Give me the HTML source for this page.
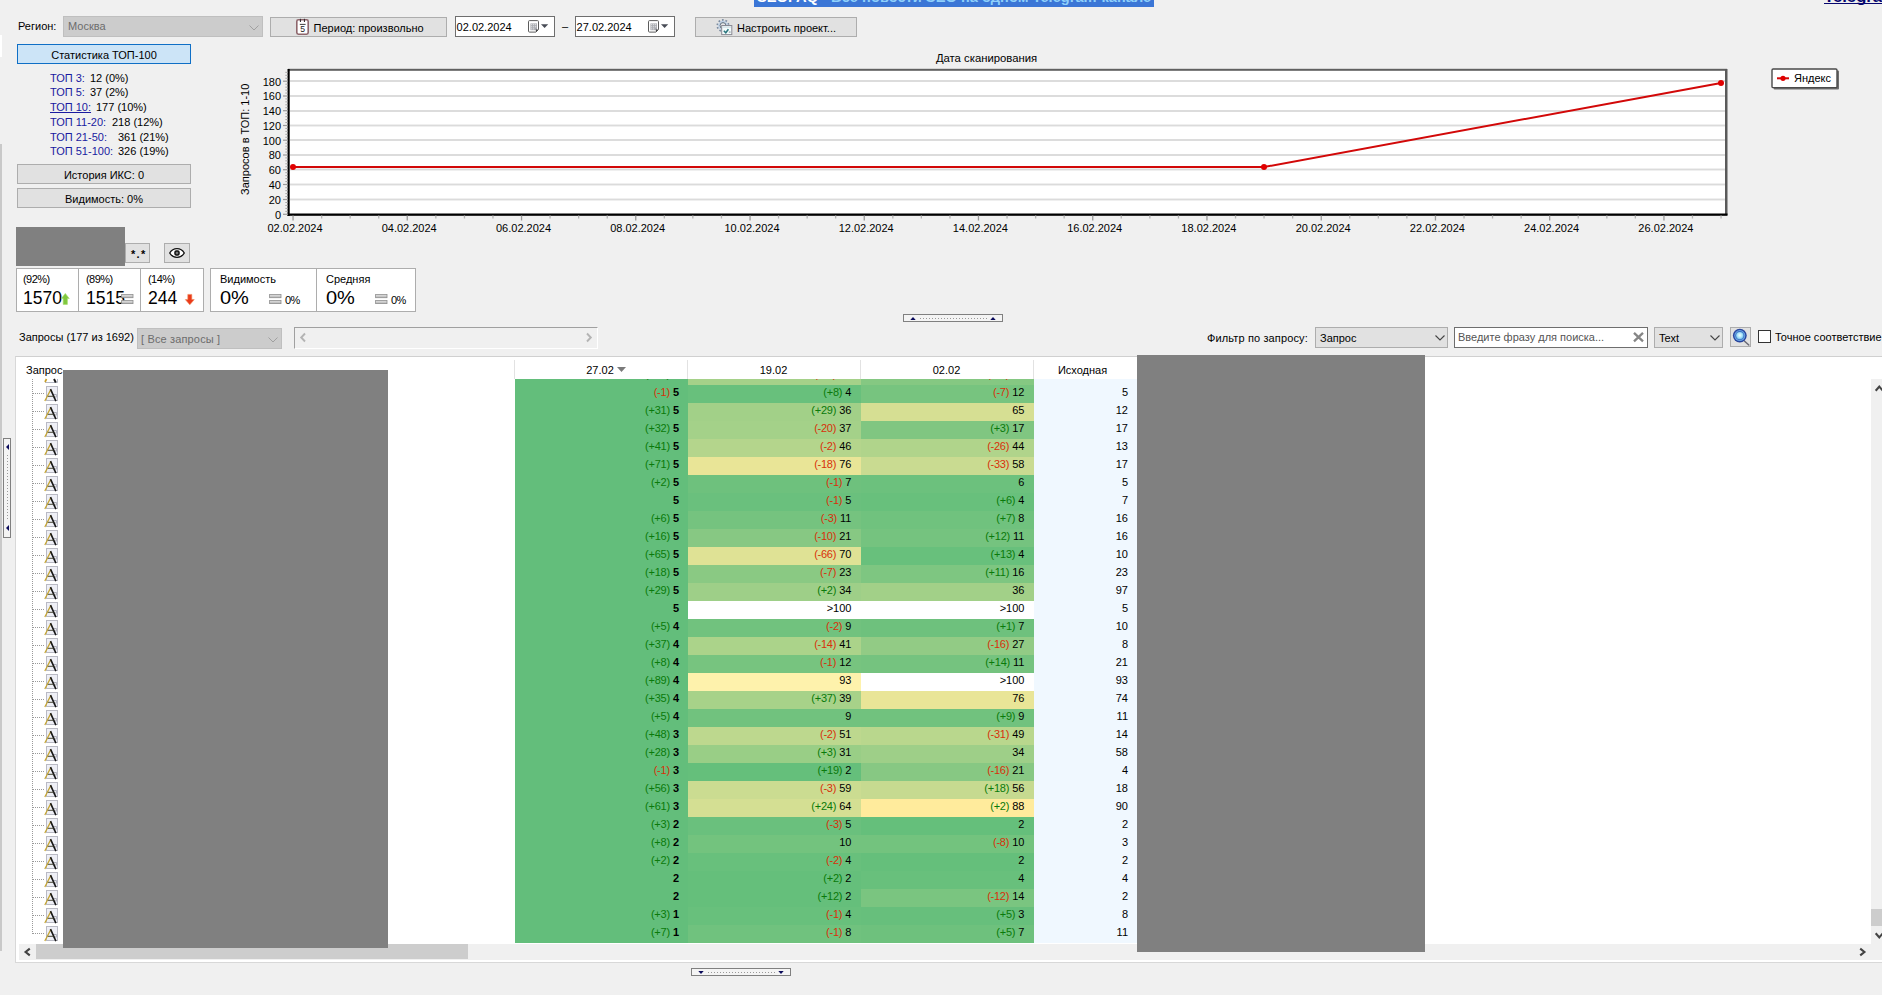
<!DOCTYPE html>
<html lang="ru"><head><meta charset="utf-8"><title>Позиции</title>
<style>
html,body{margin:0;padding:0;width:1882px;height:995px;overflow:hidden}
body{width:1882px;height:995px;overflow:hidden;background:#f0f0f0;position:relative;font:11px "Liberation Sans",Arial,sans-serif;color:#000}
div,span,a{position:absolute;white-space:pre;box-sizing:border-box}
.t{line-height:13px;height:13px}
.btn{background:#e1e1e1;border:1px solid #adadad}
.cmb{background:#cccccc;border:1px solid #bfbfbf}
.inp{background:#fff;border:1px solid #6e6e6e}
.g{color:#0a7a0a}.r{color:#d8300a}
.c{height:18px;text-align:right;line-height:13px;padding-top:0}
.c span{position:static;letter-spacing:-0.25px}
.c b{font-weight:bold}
.ic{left:44px;width:14px;height:16px}
svg{position:absolute;overflow:visible}
</style></head><body>
<div style="left:0;top:0;width:1882px;height:995px;overflow:hidden">

<div style="left:754px;top:-10px;width:400px;height:16.6px;background:#3b76d6;overflow:hidden"><span style="left:3px;top:-1.1px;font:bold 14.67px 'Liberation Sans',sans-serif;line-height:17px;height:17px;color:#8fd0fb"><span style="position:static;color:#fff">SEOFAQ</span> - Все новости SEO на одном Telegram-канале</span></div>
<a style="left:1824px;top:-13.5px;font:bold 16.7px 'Liberation Sans',sans-serif;line-height:19px;color:#06066e;text-decoration:underline;text-decoration-skip-ink:none;text-decoration-thickness:1.3px;text-underline-offset:1.4px">Telegram-канал</a>
<div style="left:0;top:35px;width:2px;height:22px;background:#fff"></div>
<div style="left:0;top:144px;width:1.8px;height:807px;background:#c9c9c9"></div>
<span class="t" style="left:18px;top:20px">Регион:</span>
<div class="cmb" style="left:63px;top:16px;width:200px;height:21px"><span class="t" style="left:4px;top:3px;color:#6d6d6d">Москва</span><svg style="left:185px;top:7.5px" width="10" height="6"><path d="M0.5 0.5 L5 5 L9.5 0.5" fill="none" stroke="#a0a0a0" stroke-width="1"/></svg></div>
<div class="btn" style="left:270px;top:17px;width:177px;height:20px"><span class="t" style="left:42.6px;top:4px">Период: произвольно</span>
<svg style="left:24px;top:0px" width="15" height="17"><rect x="1.8" y="1.8" width="11.4" height="14.4" rx="1.6" fill="#fff" stroke="#8e666c" stroke-width="1.6"/><rect x="4.9" y="0.8" width="1.1" height="3.2" fill="#3a3034"/><rect x="8.9" y="0.8" width="1.1" height="3.2" fill="#3a3034"/><rect x="4.8" y="5.9" width="5.8" height="0.9" fill="#2a2a2a"/><text x="7.7" y="14.2" font-size="8.6" font-family="Liberation Sans,sans-serif" text-anchor="middle" fill="#222">5</text></svg></div>
<div class="inp" style="left:455px;top:16px;width:100px;height:21px"><span class="t" style="left:0.6px;top:4px">02.02.2024</span>
<svg style="left:72px;top:3px" width="22" height="14"><path d="M1.5 0.6h8a1 1 0 0 1 1 1v7.9l-2.6 2.6h-6.4a1 1 0 0 1-1-1v-9.5a1 1 0 0 1 1-1z" fill="#fff" stroke="#5c5c5c" stroke-width="1"/><rect x="2.4" y="3.4" width="6.6" height="6.8" fill="#a9abb0"/><g fill="#f4f4f6"><rect x="3.2" y="4.2" width="1" height="1"/><rect x="5.2" y="4.2" width="1" height="1"/><rect x="7.2" y="4.2" width="1" height="1"/><rect x="3.2" y="6.3" width="1" height="1"/><rect x="5.2" y="6.3" width="1" height="1"/><rect x="7.2" y="6.3" width="1" height="1"/><rect x="3.2" y="8.4" width="1" height="1"/><rect x="5.2" y="8.4" width="1" height="1"/></g><path d="M7.9 12.1v-2.6h2.6z" fill="#444"/><path d="M13 4.2h7.2l-3.6 3.9z" fill="#484c56"/></svg></div>
<span class="t" style="left:562px;top:20px">–</span>
<div class="inp" style="left:575px;top:16px;width:100px;height:21px"><span class="t" style="left:0.6px;top:4px">27.02.2024</span>
<svg style="left:72px;top:3px" width="22" height="14"><path d="M1.5 0.6h8a1 1 0 0 1 1 1v7.9l-2.6 2.6h-6.4a1 1 0 0 1-1-1v-9.5a1 1 0 0 1 1-1z" fill="#fff" stroke="#5c5c5c" stroke-width="1"/><rect x="2.4" y="3.4" width="6.6" height="6.8" fill="#a9abb0"/><g fill="#f4f4f6"><rect x="3.2" y="4.2" width="1" height="1"/><rect x="5.2" y="4.2" width="1" height="1"/><rect x="7.2" y="4.2" width="1" height="1"/><rect x="3.2" y="6.3" width="1" height="1"/><rect x="5.2" y="6.3" width="1" height="1"/><rect x="7.2" y="6.3" width="1" height="1"/><rect x="3.2" y="8.4" width="1" height="1"/><rect x="5.2" y="8.4" width="1" height="1"/></g><path d="M7.9 12.1v-2.6h2.6z" fill="#444"/><path d="M13 4.2h7.2l-3.6 3.9z" fill="#484c56"/></svg></div>
<div class="btn" style="left:695px;top:17px;width:162px;height:20px"><span class="t" style="left:41px;top:4px">Настроить проект...</span>
<svg style="left:20px;top:-0.2px" width="18" height="18"><circle cx="7" cy="7.6" r="5.6" fill="none" stroke="#7c8ca0" stroke-width="1.9" stroke-dasharray="1.7 1.82"/><circle cx="7" cy="7.6" r="4.3" fill="#d4e2f0" stroke="#c0d2e6" stroke-width="1.2"/><circle cx="7" cy="7.6" r="3" fill="#e6e6e6" stroke="#5e6e7e" stroke-width="1"/><rect x="5.7" y="7.5" width="10.1" height="9.1" fill="#f4fbfb" stroke="#8a8a94" stroke-width="1"/><rect x="6.6" y="8.4" width="8.4" height="1.3" fill="#cfe0e6"/><path d="M7.8 12.8l2 2 2.6-3.6" fill="none" stroke="#2a767e" stroke-width="1.5"/><rect x="12.8" y="13.6" width="1.8" height="0.9" fill="#6a7a86"/></svg></div>
<div style="left:17px;top:44px;width:174px;height:20px;background:#cce4f7;border:1px solid #0f6fc6"><span class="t" style="left:0;width:172px;text-align:center;top:4px">Статистика ТОП-100</span></div>
<span class="t" style="left:50px;top:72px;color:#1a1aa0">ТОП 3:</span><span class="t" style="left:90px;top:72px">12 (0%)</span>
<span class="t" style="left:50px;top:86px;color:#1a1aa0">ТОП 5:</span><span class="t" style="left:90px;top:86px">37 (2%)</span>
<span class="t" style="left:50px;top:101px;color:#1a1aa0;text-decoration:underline">ТОП 10:</span><span class="t" style="left:96px;top:101px">177 (10%)</span>
<span class="t" style="left:50px;top:116px;color:#1a1aa0">ТОП 11-20:</span><span class="t" style="left:112px;top:116px">218 (12%)</span>
<span class="t" style="left:50px;top:131px;color:#1a1aa0">ТОП 21-50:</span><span class="t" style="left:118px;top:131px">361 (21%)</span>
<span class="t" style="left:50px;top:145px;color:#1a1aa0">ТОП 51-100:</span><span class="t" style="left:118px;top:145px">326 (19%)</span>
<div class="btn" style="left:17px;top:164px;width:174px;height:20px"><span class="t" style="left:0;width:172px;text-align:center;top:4px">История ИКС: 0</span></div>
<div class="btn" style="left:17px;top:188px;width:174px;height:20px"><span class="t" style="left:0;width:172px;text-align:center;top:4px">Видимость: 0%</span></div>
<div style="left:16px;top:227px;width:109px;height:39px;background:#808080"></div>
<div class="btn" style="left:125px;top:243px;width:25px;height:20px"><span class="t" style="left:5px;top:4px;font-weight:bold;font-size:11px;letter-spacing:1.3px">*.*</span></div>
<div class="btn" style="left:164px;top:243px;width:26px;height:20px"><svg style="left:4px;top:4px" width="16" height="10"><path d="M0.7 5C3 1.2 5.5 0.7 8 0.7S13 1.2 15.3 5C13 8.8 10.5 9.3 8 9.3S3 8.8 0.7 5z" fill="#fff" stroke="#111" stroke-width="1.3"/><rect x="6" y="3" width="4" height="4" rx="1.2" fill="#777" stroke="#111" stroke-width="1.5"/></svg></div>
<div style="left:16px;top:268px;width:188px;height:44px;background:#fff;border:1px solid #adadad"></div>
<div style="left:78px;top:268px;width:1px;height:44px;background:#adadad"></div><div style="left:140px;top:268px;width:1px;height:44px;background:#adadad"></div>
<div style="left:210px;top:268px;width:206px;height:44px;background:#fff;border:1px solid #adadad"></div>
<div style="left:316px;top:268px;width:1px;height:44px;background:#adadad"></div>
<span class="t" style="left:23px;top:273px;letter-spacing:-0.55px">(92%)</span><span style="left:23px;top:288px;font-size:18.8px;line-height:20px;height:20px;transform-origin:0 50%;transform:scaleX(0.935)">1570</span>
<span class="t" style="left:86px;top:273px;letter-spacing:-0.55px">(89%)</span><span style="left:86px;top:288px;font-size:18.8px;line-height:20px;height:20px;transform-origin:0 50%;transform:scaleX(0.935)">1515</span>
<span class="t" style="left:148px;top:273px;letter-spacing:-0.55px">(14%)</span><span style="left:148px;top:288px;font-size:18.8px;line-height:20px;height:20px;transform-origin:0 50%;transform:scaleX(0.935)">244</span>
<span class="t" style="left:220px;top:273px">Видимость</span><span style="left:220px;top:288px;font-size:18.8px;line-height:20px;height:20px;transform-origin:0 50%;transform:scaleX(1.065)">0%</span>
<span class="t" style="left:326px;top:273px">Средняя</span><span style="left:326px;top:288px;font-size:18.8px;line-height:20px;height:20px;transform-origin:0 50%;transform:scaleX(1.065)">0%</span>
<svg style="left:61px;top:293px" width="9" height="12"><path d="M4.3 0.4L8.3 5.6H6.4V11.4H2.2V5.6H0.3z" fill="#80c83e" stroke="#a4dc6c" stroke-width="0.6"/></svg>
<svg style="left:185px;top:293.5px" width="10" height="11"><path d="M4.8 10.8L9.3 5.6H6.8V0.4H2.8V5.6H0.3z" fill="#ea3a1a" stroke="#f08a5a" stroke-width="0.6"/></svg>
<svg style="left:121px;top:294px" width="13" height="10"><defs><linearGradient id="eg121" x1="0" y1="0" x2="0" y2="1"><stop offset="0" stop-color="#e4e4e4"/><stop offset="1" stop-color="#b4b4b4"/></linearGradient></defs><rect x="0.6" y="0.5" width="11.4" height="3.2" fill="url(#eg121)" stroke="#8e8e8e" stroke-width="0.8"/><rect x="0.6" y="6.4" width="11.4" height="3.2" fill="url(#eg121)" stroke="#8e8e8e" stroke-width="0.8"/></svg>
<svg style="left:269px;top:294px" width="13" height="10"><defs><linearGradient id="eg269" x1="0" y1="0" x2="0" y2="1"><stop offset="0" stop-color="#e4e4e4"/><stop offset="1" stop-color="#b4b4b4"/></linearGradient></defs><rect x="0.6" y="0.5" width="11.4" height="3.2" fill="url(#eg269)" stroke="#8e8e8e" stroke-width="0.8"/><rect x="0.6" y="6.4" width="11.4" height="3.2" fill="url(#eg269)" stroke="#8e8e8e" stroke-width="0.8"/></svg>
<svg style="left:375px;top:294px" width="13" height="10"><defs><linearGradient id="eg375" x1="0" y1="0" x2="0" y2="1"><stop offset="0" stop-color="#e4e4e4"/><stop offset="1" stop-color="#b4b4b4"/></linearGradient></defs><rect x="0.6" y="0.5" width="11.4" height="3.2" fill="url(#eg375)" stroke="#8e8e8e" stroke-width="0.8"/><rect x="0.6" y="6.4" width="11.4" height="3.2" fill="url(#eg375)" stroke="#8e8e8e" stroke-width="0.8"/></svg>
<span class="t" style="left:285px;top:294px;letter-spacing:-0.7px">0%</span><span class="t" style="left:391px;top:294px;letter-spacing:-0.7px">0%</span>
<svg style="left:0;top:0" width="1882" height="250" font-family="Liberation Sans,Arial,sans-serif" font-size="11">
<rect x="288" y="69" width="1439" height="146" fill="#fff"/>
<rect x="290" y="80.05" width="1435" height="1.9" fill="#dbdbdb"/>
<rect x="290" y="95.05" width="1435" height="1.9" fill="#dbdbdb"/>
<rect x="290" y="110.05" width="1435" height="1.9" fill="#dbdbdb"/>
<rect x="290" y="124.55" width="1435" height="1.9" fill="#dbdbdb"/>
<rect x="290" y="139.05" width="1435" height="1.9" fill="#dbdbdb"/>
<rect x="290" y="154.05" width="1435" height="1.9" fill="#dbdbdb"/>
<rect x="290" y="168.55" width="1435" height="1.9" fill="#dbdbdb"/>
<rect x="290" y="183.55" width="1435" height="1.9" fill="#dbdbdb"/>
<rect x="290" y="198.55" width="1435" height="1.9" fill="#dbdbdb"/>
<rect x="288" y="68.8" width="1439" height="2" fill="#606060"/><rect x="1725" y="69" width="2.5" height="146" fill="#5a5a5a"/>
<rect x="287.5" y="69" width="2.2" height="147" fill="#000"/><rect x="287.5" y="213.5" width="1440" height="2.3" fill="#000"/>
<rect x="283" y="213.70000000000002" width="5" height="1.2" fill="#9a9a9a"/>
<text x="281" y="218.6" text-anchor="end">0</text>
<rect x="285.3" y="210.85" width="2.5" height="1" fill="#a8a8a8"/>
<rect x="285.3" y="207.90" width="2.5" height="1" fill="#a8a8a8"/>
<rect x="285.3" y="204.95" width="2.5" height="1" fill="#a8a8a8"/>
<rect x="285.3" y="202.00" width="2.5" height="1" fill="#a8a8a8"/>
<rect x="283" y="198.9" width="5" height="1.2" fill="#9a9a9a"/>
<text x="281" y="203.8" text-anchor="end">20</text>
<rect x="285.3" y="196.05" width="2.5" height="1" fill="#a8a8a8"/>
<rect x="285.3" y="193.10" width="2.5" height="1" fill="#a8a8a8"/>
<rect x="285.3" y="190.15" width="2.5" height="1" fill="#a8a8a8"/>
<rect x="285.3" y="187.20" width="2.5" height="1" fill="#a8a8a8"/>
<rect x="283" y="183.9" width="5" height="1.2" fill="#9a9a9a"/>
<text x="281" y="188.8" text-anchor="end">40</text>
<rect x="285.3" y="181.05" width="2.5" height="1" fill="#a8a8a8"/>
<rect x="285.3" y="178.10" width="2.5" height="1" fill="#a8a8a8"/>
<rect x="285.3" y="175.15" width="2.5" height="1" fill="#a8a8a8"/>
<rect x="285.3" y="172.20" width="2.5" height="1" fill="#a8a8a8"/>
<rect x="283" y="169.1" width="5" height="1.2" fill="#9a9a9a"/>
<text x="281" y="174.0" text-anchor="end">60</text>
<rect x="285.3" y="166.25" width="2.5" height="1" fill="#a8a8a8"/>
<rect x="285.3" y="163.30" width="2.5" height="1" fill="#a8a8a8"/>
<rect x="285.3" y="160.35" width="2.5" height="1" fill="#a8a8a8"/>
<rect x="285.3" y="157.40" width="2.5" height="1" fill="#a8a8a8"/>
<rect x="283" y="154.4" width="5" height="1.2" fill="#9a9a9a"/>
<text x="281" y="159.3" text-anchor="end">80</text>
<rect x="285.3" y="151.55" width="2.5" height="1" fill="#a8a8a8"/>
<rect x="285.3" y="148.60" width="2.5" height="1" fill="#a8a8a8"/>
<rect x="285.3" y="145.65" width="2.5" height="1" fill="#a8a8a8"/>
<rect x="285.3" y="142.70" width="2.5" height="1" fill="#a8a8a8"/>
<rect x="283" y="139.6" width="5" height="1.2" fill="#9a9a9a"/>
<text x="281" y="144.5" text-anchor="end">100</text>
<rect x="285.3" y="136.75" width="2.5" height="1" fill="#a8a8a8"/>
<rect x="285.3" y="133.80" width="2.5" height="1" fill="#a8a8a8"/>
<rect x="285.3" y="130.85" width="2.5" height="1" fill="#a8a8a8"/>
<rect x="285.3" y="127.90" width="2.5" height="1" fill="#a8a8a8"/>
<rect x="283" y="124.9" width="5" height="1.2" fill="#9a9a9a"/>
<text x="281" y="129.8" text-anchor="end">120</text>
<rect x="285.3" y="122.05" width="2.5" height="1" fill="#a8a8a8"/>
<rect x="285.3" y="119.10" width="2.5" height="1" fill="#a8a8a8"/>
<rect x="285.3" y="116.15" width="2.5" height="1" fill="#a8a8a8"/>
<rect x="285.3" y="113.20" width="2.5" height="1" fill="#a8a8a8"/>
<rect x="283" y="110.10000000000001" width="5" height="1.2" fill="#9a9a9a"/>
<text x="281" y="115.0" text-anchor="end">140</text>
<rect x="285.3" y="107.25" width="2.5" height="1" fill="#a8a8a8"/>
<rect x="285.3" y="104.30" width="2.5" height="1" fill="#a8a8a8"/>
<rect x="285.3" y="101.35" width="2.5" height="1" fill="#a8a8a8"/>
<rect x="285.3" y="98.40" width="2.5" height="1" fill="#a8a8a8"/>
<rect x="283" y="95.4" width="5" height="1.2" fill="#9a9a9a"/>
<text x="281" y="100.3" text-anchor="end">160</text>
<rect x="285.3" y="92.55" width="2.5" height="1" fill="#a8a8a8"/>
<rect x="285.3" y="89.60" width="2.5" height="1" fill="#a8a8a8"/>
<rect x="285.3" y="86.65" width="2.5" height="1" fill="#a8a8a8"/>
<rect x="285.3" y="83.70" width="2.5" height="1" fill="#a8a8a8"/>
<rect x="283" y="80.60000000000001" width="5" height="1.2" fill="#9a9a9a"/>
<text x="281" y="85.5" text-anchor="end">180</text>
<rect x="285.3" y="77.75" width="2.5" height="1" fill="#a8a8a8"/>
<rect x="285.3" y="74.80" width="2.5" height="1" fill="#a8a8a8"/>
<rect x="285.3" y="71.85" width="2.5" height="1" fill="#a8a8a8"/>
<rect x="292.4" y="215.5" width="1.3" height="5" fill="#9a9a9a"/>
<text x="295.0" y="232" text-anchor="middle">02.02.2024</text>
<rect x="321.0" y="215.5" width="1.3" height="3" fill="#b4b4b4"/>
<rect x="349.5" y="215.5" width="1.3" height="3" fill="#b4b4b4"/>
<rect x="378.1" y="215.5" width="1.3" height="3" fill="#b4b4b4"/>
<rect x="406.6" y="215.5" width="1.3" height="5" fill="#9a9a9a"/>
<text x="409.2" y="232" text-anchor="middle">04.02.2024</text>
<rect x="435.2" y="215.5" width="1.3" height="3" fill="#b4b4b4"/>
<rect x="463.8" y="215.5" width="1.3" height="3" fill="#b4b4b4"/>
<rect x="492.3" y="215.5" width="1.3" height="3" fill="#b4b4b4"/>
<rect x="520.9" y="215.5" width="1.3" height="5" fill="#9a9a9a"/>
<text x="523.5" y="232" text-anchor="middle">06.02.2024</text>
<rect x="549.4" y="215.5" width="1.3" height="3" fill="#b4b4b4"/>
<rect x="578.0" y="215.5" width="1.3" height="3" fill="#b4b4b4"/>
<rect x="606.6" y="215.5" width="1.3" height="3" fill="#b4b4b4"/>
<rect x="635.1" y="215.5" width="1.3" height="5" fill="#9a9a9a"/>
<text x="637.7" y="232" text-anchor="middle">08.02.2024</text>
<rect x="663.7" y="215.5" width="1.3" height="3" fill="#b4b4b4"/>
<rect x="692.2" y="215.5" width="1.3" height="3" fill="#b4b4b4"/>
<rect x="720.8" y="215.5" width="1.3" height="3" fill="#b4b4b4"/>
<rect x="749.4" y="215.5" width="1.3" height="5" fill="#9a9a9a"/>
<text x="752.0" y="232" text-anchor="middle">10.02.2024</text>
<rect x="777.9" y="215.5" width="1.3" height="3" fill="#b4b4b4"/>
<rect x="806.5" y="215.5" width="1.3" height="3" fill="#b4b4b4"/>
<rect x="835.0" y="215.5" width="1.3" height="3" fill="#b4b4b4"/>
<rect x="863.6" y="215.5" width="1.3" height="5" fill="#9a9a9a"/>
<text x="866.2" y="232" text-anchor="middle">12.02.2024</text>
<rect x="892.2" y="215.5" width="1.3" height="3" fill="#b4b4b4"/>
<rect x="920.7" y="215.5" width="1.3" height="3" fill="#b4b4b4"/>
<rect x="949.3" y="215.5" width="1.3" height="3" fill="#b4b4b4"/>
<rect x="977.8" y="215.5" width="1.3" height="5" fill="#9a9a9a"/>
<text x="980.4" y="232" text-anchor="middle">14.02.2024</text>
<rect x="1006.4" y="215.5" width="1.3" height="3" fill="#b4b4b4"/>
<rect x="1035.0" y="215.5" width="1.3" height="3" fill="#b4b4b4"/>
<rect x="1063.5" y="215.5" width="1.3" height="3" fill="#b4b4b4"/>
<rect x="1092.1" y="215.5" width="1.3" height="5" fill="#9a9a9a"/>
<text x="1094.7" y="232" text-anchor="middle">16.02.2024</text>
<rect x="1120.6" y="215.5" width="1.3" height="3" fill="#b4b4b4"/>
<rect x="1149.2" y="215.5" width="1.3" height="3" fill="#b4b4b4"/>
<rect x="1177.8" y="215.5" width="1.3" height="3" fill="#b4b4b4"/>
<rect x="1206.3" y="215.5" width="1.3" height="5" fill="#9a9a9a"/>
<text x="1208.9" y="232" text-anchor="middle">18.02.2024</text>
<rect x="1234.9" y="215.5" width="1.3" height="3" fill="#b4b4b4"/>
<rect x="1263.4" y="215.5" width="1.3" height="3" fill="#b4b4b4"/>
<rect x="1292.0" y="215.5" width="1.3" height="3" fill="#b4b4b4"/>
<rect x="1320.6" y="215.5" width="1.3" height="5" fill="#9a9a9a"/>
<text x="1323.2" y="232" text-anchor="middle">20.02.2024</text>
<rect x="1349.1" y="215.5" width="1.3" height="3" fill="#b4b4b4"/>
<rect x="1377.7" y="215.5" width="1.3" height="3" fill="#b4b4b4"/>
<rect x="1406.2" y="215.5" width="1.3" height="3" fill="#b4b4b4"/>
<rect x="1434.8" y="215.5" width="1.3" height="5" fill="#9a9a9a"/>
<text x="1437.4" y="232" text-anchor="middle">22.02.2024</text>
<rect x="1463.4" y="215.5" width="1.3" height="3" fill="#b4b4b4"/>
<rect x="1491.9" y="215.5" width="1.3" height="3" fill="#b4b4b4"/>
<rect x="1520.5" y="215.5" width="1.3" height="3" fill="#b4b4b4"/>
<rect x="1549.0" y="215.5" width="1.3" height="5" fill="#9a9a9a"/>
<text x="1551.6" y="232" text-anchor="middle">24.02.2024</text>
<rect x="1577.6" y="215.5" width="1.3" height="3" fill="#b4b4b4"/>
<rect x="1606.2" y="215.5" width="1.3" height="3" fill="#b4b4b4"/>
<rect x="1634.7" y="215.5" width="1.3" height="3" fill="#b4b4b4"/>
<rect x="1663.3" y="215.5" width="1.3" height="5" fill="#9a9a9a"/>
<text x="1665.9" y="232" text-anchor="middle">26.02.2024</text>
<rect x="1691.8" y="215.5" width="1.3" height="3" fill="#b4b4b4"/>
<rect x="1720.4" y="215.5" width="1.3" height="3" fill="#b4b4b4"/>
<text x="986.5" y="62" text-anchor="middle" font-size="11.3">Дата сканирования</text>
<text transform="translate(248.5,139.3) rotate(-90)" text-anchor="middle">Запросов в ТОП: 1-10</text>
<polyline points="293,167 1264,167 1721,83" fill="none" stroke="#d20808" stroke-width="2" stroke-linejoin="round"/>
<circle cx="293" cy="167" r="3" fill="#e00000"/>
<circle cx="1264" cy="167" r="3" fill="#e00000"/>
<circle cx="1721" cy="83" r="3" fill="#e00000"/>
<rect x="1773.6" y="70.6" width="65.4" height="19" rx="1" fill="#6e6e6e"/>
<rect x="1772" y="69" width="65" height="18.6" rx="1.2" fill="#fff" stroke="#4a4a4a" stroke-width="1.4"/>
<rect x="1777" y="77.3" width="12" height="2" fill="#d20808"/><circle cx="1783" cy="78.3" r="2.6" fill="#e00000"/>
<text x="1794" y="82.3">Яндекс</text>
</svg>
<div style="left:903px;top:314px;width:100px;height:8px;border:1px solid #808080;background:#f4f4f4"></div>
<svg style="left:910px;top:316.5px" width="6" height="3"><path d="M0.3 3h5.4l-2.7-3z" fill="#0a0a5a"/></svg>
<svg style="left:990px;top:316.5px" width="6" height="3"><path d="M0.3 3h5.4l-2.7-3z" fill="#0a0a5a"/></svg>
<div style="left:920px;top:317.5px;width:68px;height:1px;background:repeating-linear-gradient(90deg,#9a9a9a 0 1px,transparent 1px 3px)"></div>
<div style="left:691px;top:968px;width:100px;height:8px;border:1px solid #808080;background:#f4f4f4"></div>
<svg style="left:698px;top:970.5px" width="6" height="3"><path d="M0.3 0h5.4l-2.7 3z" fill="#0a0a5a"/></svg>
<svg style="left:778px;top:970.5px" width="6" height="3"><path d="M0.3 0h5.4l-2.7 3z" fill="#0a0a5a"/></svg>
<div style="left:708px;top:971.5px;width:68px;height:1px;background:repeating-linear-gradient(90deg,#9a9a9a 0 1px,transparent 1px 3px)"></div>
<div style="left:3px;top:438px;width:8px;height:100px;border:1px solid #808080;background:#f4f4f4"></div>
<svg style="left:5.5px;top:444px" width="3" height="6"><path d="M3 0v6l-3-3z" fill="#0a0a5a"/></svg>
<svg style="left:5.5px;top:525px" width="3" height="6"><path d="M3 0v6l-3-3z" fill="#0a0a5a"/></svg>
<div style="left:6.5px;top:455px;width:1px;height:66px;background:repeating-linear-gradient(180deg,#9a9a9a 0 1px,transparent 1px 3px)"></div>
<span class="t" style="left:19px;top:331px">Запросы (177 из 1692)</span>
<div class="cmb" style="left:137px;top:328px;width:145px;height:21px"><span class="t" style="left:3px;top:4px;color:#6d6d6d;letter-spacing:0.15px">[ Все запросы ]</span><svg style="left:130px;top:8px" width="10" height="6"><path d="M0.5 0.5 L5 5 L9.5 0.5" fill="none" stroke="#a0a0a0" stroke-width="1"/></svg></div>
<div style="left:294px;top:327px;width:304px;height:22px;border-top:1px solid #a0a0a0;border-left:1px solid #a0a0a0;border-right:1px solid #fff;border-bottom:1px solid #fff;background:#f0f0f0"></div>
<svg style="left:300px;top:333px" width="6" height="9"><path d="M5 0.5L1.2 4.5L5 8.5" fill="none" stroke="#b4b4b4" stroke-width="1.9"/></svg>
<svg style="left:586px;top:333px" width="6" height="9"><path d="M1 0.5L4.8 4.5L1 8.5" fill="none" stroke="#b4b4b4" stroke-width="1.9"/></svg>
<span class="t" style="left:1207px;top:332px;letter-spacing:0.13px">Фильтр по запросу:</span>
<div class="btn" style="left:1315px;top:327px;width:133px;height:21px"><span class="t" style="left:4px;top:4px">Запрос</span><svg style="left:119px;top:7px" width="10" height="6"><path d="M0.5 0.5 L5 5 L9.5 0.5" fill="none" stroke="#444" stroke-width="1.1"/></svg></div>
<div class="inp" style="left:1454px;top:327px;width:194px;height:21px"><span class="t" style="left:3px;top:3px;color:#555">Введите фразу для поиска...</span><svg style="left:178px;top:4px" width="11" height="10"><path d="M1 0.8L10 9.4M10 0.8L1 9.4" stroke="#868686" stroke-width="2.3"/></svg></div>
<div class="btn" style="left:1654px;top:327px;width:69px;height:21px"><span class="t" style="left:4px;top:4px">Text</span><svg style="left:55px;top:7px" width="10" height="6"><path d="M0.5 0.5 L5 5 L9.5 0.5" fill="none" stroke="#444" stroke-width="1.1"/></svg></div>
<div class="btn" style="left:1730px;top:327px;width:21px;height:20px"><svg style="left:0px;top:0px" width="19" height="18"><defs><radialGradient id="mg" cx="0.5" cy="0.45" r="0.5"><stop offset="0" stop-color="#f0fdff"/><stop offset="0.6" stop-color="#b0e8fa"/><stop offset="1" stop-color="#7cc4ee"/></radialGradient></defs><path d="M13.6 13.2L17.8 17" stroke="#6a6a74" stroke-width="1.5" stroke-linecap="round"/><circle cx="8.8" cy="7.6" r="6.9" fill="#27449e"/><circle cx="8.8" cy="7.6" r="5.5" fill="#6aa6e2"/><circle cx="8.8" cy="7.6" r="4.5" fill="#3c6ec4"/><circle cx="8.8" cy="7.6" r="3.7" fill="url(#mg)"/></svg></div>
<div style="left:1758px;top:330px;width:13px;height:13px;background:#fff;border:1px solid #333"></div>
<span class="t" style="left:1775px;top:331px">Точное соответствие</span>
<div style="left:15px;top:356px;width:1870px;height:607px;background:#fff;border:1px solid #d8d8d8;border-top-color:#d0d0d0"></div>
<div style="left:1034px;top:379px;width:103px;height:564px;background:#f0f8ff"></div>
<span class="t" style="left:26px;top:364px">Запрос</span>
<div style="left:514px;top:360px;width:1px;height:19px;background:#e2e2e2"></div>
<div style="left:687px;top:360px;width:1px;height:19px;background:#e2e2e2"></div>
<div style="left:860px;top:360px;width:1px;height:19px;background:#e2e2e2"></div>
<div style="left:1033px;top:360px;width:1px;height:19px;background:#e2e2e2"></div>
<span class="t" style="left:515px;width:173px;text-align:center;top:363.6px;padding-right:3px">27.02</span><svg style="left:617px;top:367px" width="9" height="5"><path d="M0 0h9l-4.5 5z" fill="#7a7a7a"/></svg>
<span class="t" style="left:688px;width:173px;text-align:center;top:363.6px;padding-right:2px">19.02</span>
<span class="t" style="left:861px;width:173px;text-align:center;top:363.6px;padding-right:2px">02.02</span>
<span class="t" style="left:1034px;width:103px;text-align:center;top:364px;padding-right:6px">Исходная</span>
<div style="left:515px;top:379px;width:173px;height:6px;background:#63be7b;overflow:hidden"><div class="c" style="left:0;top:-12px;width:173px;padding:1px 9px 0 0"><span class="g">(+31)</span> <b>5</b></div></div>
<div style="left:688px;top:379px;width:173px;height:6px;background:#a5d189;overflow:hidden"><div class="c" style="left:0;top:-12px;width:173px;padding:1px 9.6px 0 0"><span class="r">(-20)</span> 38</div></div>
<div style="left:861px;top:379px;width:173px;height:6px;background:#85c882;overflow:hidden"><div class="c" style="left:0;top:-12px;width:173px;padding:1px 9.6px 0 0"><span class="r">(-26)</span> 20</div></div>
<div class="c" style="left:515px;top:385px;width:173px;background:#63be7b;padding:1px 9px 0 0"><span class="r">(-1)</span> <b>5</b></div>
<div class="c" style="left:688px;top:385px;width:173px;background:#68c07c;padding:1px 9.6px 0 0"><span class="g">(+8)</span> 4</div>
<div class="c" style="left:861px;top:385px;width:173px;background:#77c47f;padding:1px 9.6px 0 0"><span class="r">(-7)</span> 12</div>
<div class="c" style="left:1034px;top:385px;width:103px;padding:1px 9px 0 0">5</div>
<div class="c" style="left:515px;top:403px;width:173px;background:#63be7b;padding:1px 9px 0 0"><span class="g">(+31)</span> <b>5</b></div>
<div class="c" style="left:688px;top:403px;width:173px;background:#a2d088;padding:1px 9.6px 0 0"><span class="g">(+29)</span> 36</div>
<div class="c" style="left:861px;top:403px;width:173px;background:#d6df93;padding:1px 9.6px 0 0">65</div>
<div class="c" style="left:1034px;top:403px;width:103px;padding:1px 9px 0 0">12</div>
<div class="c" style="left:515px;top:421px;width:173px;background:#63be7b;padding:1px 9px 0 0"><span class="g">(+32)</span> <b>5</b></div>
<div class="c" style="left:688px;top:421px;width:173px;background:#a4d189;padding:1px 9.6px 0 0"><span class="r">(-20)</span> 37</div>
<div class="c" style="left:861px;top:421px;width:173px;background:#80c681;padding:1px 9.6px 0 0"><span class="g">(+3)</span> 17</div>
<div class="c" style="left:1034px;top:421px;width:103px;padding:1px 9px 0 0">17</div>
<div class="c" style="left:515px;top:439px;width:173px;background:#63be7b;padding:1px 9px 0 0"><span class="g">(+41)</span> <b>5</b></div>
<div class="c" style="left:688px;top:439px;width:173px;background:#b4d58c;padding:1px 9.6px 0 0"><span class="r">(-2)</span> 46</div>
<div class="c" style="left:861px;top:439px;width:173px;background:#b0d48b;padding:1px 9.6px 0 0"><span class="r">(-26)</span> 44</div>
<div class="c" style="left:1034px;top:439px;width:103px;padding:1px 9px 0 0">13</div>
<div class="c" style="left:515px;top:457px;width:173px;background:#63be7b;padding:1px 9px 0 0"><span class="g">(+71)</span> <b>5</b></div>
<div class="c" style="left:688px;top:457px;width:173px;background:#e9e597;padding:1px 9.6px 0 0"><span class="r">(-18)</span> 76</div>
<div class="c" style="left:861px;top:457px;width:173px;background:#c9db91;padding:1px 9.6px 0 0"><span class="r">(-33)</span> 58</div>
<div class="c" style="left:1034px;top:457px;width:103px;padding:1px 9px 0 0">17</div>
<div class="c" style="left:515px;top:475px;width:173px;background:#63be7b;padding:1px 9px 0 0"><span class="g">(+2)</span> <b>5</b></div>
<div class="c" style="left:688px;top:475px;width:173px;background:#6ec17d;padding:1px 9.6px 0 0"><span class="r">(-1)</span> 7</div>
<div class="c" style="left:861px;top:475px;width:173px;background:#6cc17d;padding:1px 9.6px 0 0">6</div>
<div class="c" style="left:1034px;top:475px;width:103px;padding:1px 9px 0 0">5</div>
<div class="c" style="left:515px;top:493px;width:173px;background:#63be7b;padding:1px 9px 0 0"><b>5</b></div>
<div class="c" style="left:688px;top:493px;width:173px;background:#6ac07d;padding:1px 9.6px 0 0"><span class="r">(-1)</span> 5</div>
<div class="c" style="left:861px;top:493px;width:173px;background:#68c07c;padding:1px 9.6px 0 0"><span class="g">(+6)</span> 4</div>
<div class="c" style="left:1034px;top:493px;width:103px;padding:1px 9px 0 0">7</div>
<div class="c" style="left:515px;top:511px;width:173px;background:#63be7b;padding:1px 9px 0 0"><span class="g">(+6)</span> <b>5</b></div>
<div class="c" style="left:688px;top:511px;width:173px;background:#75c37f;padding:1px 9.6px 0 0"><span class="r">(-3)</span> 11</div>
<div class="c" style="left:861px;top:511px;width:173px;background:#70c27e;padding:1px 9.6px 0 0"><span class="g">(+7)</span> 8</div>
<div class="c" style="left:1034px;top:511px;width:103px;padding:1px 9px 0 0">16</div>
<div class="c" style="left:515px;top:529px;width:173px;background:#63be7b;padding:1px 9px 0 0"><span class="g">(+16)</span> <b>5</b></div>
<div class="c" style="left:688px;top:529px;width:173px;background:#87c883;padding:1px 9.6px 0 0"><span class="r">(-10)</span> 21</div>
<div class="c" style="left:861px;top:529px;width:173px;background:#75c37f;padding:1px 9.6px 0 0"><span class="g">(+12)</span> 11</div>
<div class="c" style="left:1034px;top:529px;width:103px;padding:1px 9px 0 0">16</div>
<div class="c" style="left:515px;top:547px;width:173px;background:#63be7b;padding:1px 9px 0 0"><span class="g">(+65)</span> <b>5</b></div>
<div class="c" style="left:688px;top:547px;width:173px;background:#dfe295;padding:1px 9.6px 0 0"><span class="r">(-66)</span> 70</div>
<div class="c" style="left:861px;top:547px;width:173px;background:#68c07c;padding:1px 9.6px 0 0"><span class="g">(+13)</span> 4</div>
<div class="c" style="left:1034px;top:547px;width:103px;padding:1px 9px 0 0">10</div>
<div class="c" style="left:515px;top:565px;width:173px;background:#63be7b;padding:1px 9px 0 0"><span class="g">(+18)</span> <b>5</b></div>
<div class="c" style="left:688px;top:565px;width:173px;background:#8ac983;padding:1px 9.6px 0 0"><span class="r">(-7)</span> 23</div>
<div class="c" style="left:861px;top:565px;width:173px;background:#7ec681;padding:1px 9.6px 0 0"><span class="g">(+11)</span> 16</div>
<div class="c" style="left:1034px;top:565px;width:103px;padding:1px 9px 0 0">23</div>
<div class="c" style="left:515px;top:583px;width:173px;background:#63be7b;padding:1px 9px 0 0"><span class="g">(+29)</span> <b>5</b></div>
<div class="c" style="left:688px;top:583px;width:173px;background:#9ecf88;padding:1px 9.6px 0 0"><span class="g">(+2)</span> 34</div>
<div class="c" style="left:861px;top:583px;width:173px;background:#a2d088;padding:1px 9.6px 0 0">36</div>
<div class="c" style="left:1034px;top:583px;width:103px;padding:1px 9px 0 0">97</div>
<div class="c" style="left:515px;top:601px;width:173px;background:#63be7b;padding:1px 9px 0 0"><b>5</b></div>
<div class="c" style="left:688px;top:601px;width:173px;background:#ffffff;padding:1px 9.6px 0 0">>100</div>
<div class="c" style="left:861px;top:601px;width:173px;background:#ffffff;padding:1px 9.6px 0 0">>100</div>
<div class="c" style="left:1034px;top:601px;width:103px;padding:1px 9px 0 0">5</div>
<div class="c" style="left:515px;top:619px;width:173px;background:#63be7b;padding:1px 9px 0 0"><span class="g">(+5)</span> <b>4</b></div>
<div class="c" style="left:688px;top:619px;width:173px;background:#71c27e;padding:1px 9.6px 0 0"><span class="r">(-2)</span> 9</div>
<div class="c" style="left:861px;top:619px;width:173px;background:#6ec17d;padding:1px 9.6px 0 0"><span class="g">(+1)</span> 7</div>
<div class="c" style="left:1034px;top:619px;width:103px;padding:1px 9px 0 0">10</div>
<div class="c" style="left:515px;top:637px;width:173px;background:#63be7b;padding:1px 9px 0 0"><span class="g">(+37)</span> <b>4</b></div>
<div class="c" style="left:688px;top:637px;width:173px;background:#abd38a;padding:1px 9.6px 0 0"><span class="r">(-14)</span> 41</div>
<div class="c" style="left:861px;top:637px;width:173px;background:#92cb85;padding:1px 9.6px 0 0"><span class="r">(-16)</span> 27</div>
<div class="c" style="left:1034px;top:637px;width:103px;padding:1px 9px 0 0">8</div>
<div class="c" style="left:515px;top:655px;width:173px;background:#63be7b;padding:1px 9px 0 0"><span class="g">(+8)</span> <b>4</b></div>
<div class="c" style="left:688px;top:655px;width:173px;background:#77c47f;padding:1px 9.6px 0 0"><span class="r">(-1)</span> 12</div>
<div class="c" style="left:861px;top:655px;width:173px;background:#75c37f;padding:1px 9.6px 0 0"><span class="g">(+14)</span> 11</div>
<div class="c" style="left:1034px;top:655px;width:103px;padding:1px 9px 0 0">21</div>
<div class="c" style="left:515px;top:673px;width:173px;background:#63be7b;padding:1px 9px 0 0"><span class="g">(+89)</span> <b>4</b></div>
<div class="c" style="left:688px;top:673px;width:173px;background:#fef2ac;padding:1px 9.6px 0 0">93</div>
<div class="c" style="left:861px;top:673px;width:173px;background:#ffffff;padding:1px 9.6px 0 0">>100</div>
<div class="c" style="left:1034px;top:673px;width:103px;padding:1px 9px 0 0">93</div>
<div class="c" style="left:515px;top:691px;width:173px;background:#63be7b;padding:1px 9px 0 0"><span class="g">(+35)</span> <b>4</b></div>
<div class="c" style="left:688px;top:691px;width:173px;background:#a7d289;padding:1px 9.6px 0 0"><span class="g">(+37)</span> 39</div>
<div class="c" style="left:861px;top:691px;width:173px;background:#e9e597;padding:1px 9.6px 0 0">76</div>
<div class="c" style="left:1034px;top:691px;width:103px;padding:1px 9px 0 0">74</div>
<div class="c" style="left:515px;top:709px;width:173px;background:#63be7b;padding:1px 9px 0 0"><span class="g">(+5)</span> <b>4</b></div>
<div class="c" style="left:688px;top:709px;width:173px;background:#71c27e;padding:1px 9.6px 0 0">9</div>
<div class="c" style="left:861px;top:709px;width:173px;background:#71c27e;padding:1px 9.6px 0 0"><span class="g">(+9)</span> 9</div>
<div class="c" style="left:1034px;top:709px;width:103px;padding:1px 9px 0 0">11</div>
<div class="c" style="left:515px;top:727px;width:173px;background:#63be7b;padding:1px 9px 0 0"><span class="g">(+48)</span> <b>3</b></div>
<div class="c" style="left:688px;top:727px;width:173px;background:#bdd88e;padding:1px 9.6px 0 0"><span class="r">(-2)</span> 51</div>
<div class="c" style="left:861px;top:727px;width:173px;background:#b9d78d;padding:1px 9.6px 0 0"><span class="r">(-31)</span> 49</div>
<div class="c" style="left:1034px;top:727px;width:103px;padding:1px 9px 0 0">14</div>
<div class="c" style="left:515px;top:745px;width:173px;background:#63be7b;padding:1px 9px 0 0"><span class="g">(+28)</span> <b>3</b></div>
<div class="c" style="left:688px;top:745px;width:173px;background:#99ce86;padding:1px 9.6px 0 0"><span class="g">(+3)</span> 31</div>
<div class="c" style="left:861px;top:745px;width:173px;background:#9ecf88;padding:1px 9.6px 0 0">34</div>
<div class="c" style="left:1034px;top:745px;width:103px;padding:1px 9px 0 0">58</div>
<div class="c" style="left:515px;top:763px;width:173px;background:#63be7b;padding:1px 9px 0 0"><span class="r">(-1)</span> <b>3</b></div>
<div class="c" style="left:688px;top:763px;width:173px;background:#65bf7b;padding:1px 9.6px 0 0"><span class="g">(+19)</span> 2</div>
<div class="c" style="left:861px;top:763px;width:173px;background:#87c883;padding:1px 9.6px 0 0"><span class="r">(-16)</span> 21</div>
<div class="c" style="left:1034px;top:763px;width:103px;padding:1px 9px 0 0">4</div>
<div class="c" style="left:515px;top:781px;width:173px;background:#63be7b;padding:1px 9px 0 0"><span class="g">(+56)</span> <b>3</b></div>
<div class="c" style="left:688px;top:781px;width:173px;background:#cbdc91;padding:1px 9.6px 0 0"><span class="r">(-3)</span> 59</div>
<div class="c" style="left:861px;top:781px;width:173px;background:#c6da90;padding:1px 9.6px 0 0"><span class="g">(+18)</span> 56</div>
<div class="c" style="left:1034px;top:781px;width:103px;padding:1px 9px 0 0">18</div>
<div class="c" style="left:515px;top:799px;width:173px;background:#63be7b;padding:1px 9px 0 0"><span class="g">(+61)</span> <b>3</b></div>
<div class="c" style="left:688px;top:799px;width:173px;background:#d4df93;padding:1px 9.6px 0 0"><span class="g">(+24)</span> 64</div>
<div class="c" style="left:861px;top:799px;width:173px;background:#ffeb9c;padding:1px 9.6px 0 0"><span class="g">(+2)</span> 88</div>
<div class="c" style="left:1034px;top:799px;width:103px;padding:1px 9px 0 0">90</div>
<div class="c" style="left:515px;top:817px;width:173px;background:#63be7b;padding:1px 9px 0 0"><span class="g">(+3)</span> <b>2</b></div>
<div class="c" style="left:688px;top:817px;width:173px;background:#6ac07d;padding:1px 9.6px 0 0"><span class="r">(-3)</span> 5</div>
<div class="c" style="left:861px;top:817px;width:173px;background:#65bf7b;padding:1px 9.6px 0 0">2</div>
<div class="c" style="left:1034px;top:817px;width:103px;padding:1px 9px 0 0">2</div>
<div class="c" style="left:515px;top:835px;width:173px;background:#63be7b;padding:1px 9px 0 0"><span class="g">(+8)</span> <b>2</b></div>
<div class="c" style="left:688px;top:835px;width:173px;background:#73c37e;padding:1px 9.6px 0 0">10</div>
<div class="c" style="left:861px;top:835px;width:173px;background:#73c37e;padding:1px 9.6px 0 0"><span class="r">(-8)</span> 10</div>
<div class="c" style="left:1034px;top:835px;width:103px;padding:1px 9px 0 0">3</div>
<div class="c" style="left:515px;top:853px;width:173px;background:#63be7b;padding:1px 9px 0 0"><span class="g">(+2)</span> <b>2</b></div>
<div class="c" style="left:688px;top:853px;width:173px;background:#68c07c;padding:1px 9.6px 0 0"><span class="r">(-2)</span> 4</div>
<div class="c" style="left:861px;top:853px;width:173px;background:#65bf7b;padding:1px 9.6px 0 0">2</div>
<div class="c" style="left:1034px;top:853px;width:103px;padding:1px 9px 0 0">2</div>
<div class="c" style="left:515px;top:871px;width:173px;background:#63be7b;padding:1px 9px 0 0"><b>2</b></div>
<div class="c" style="left:688px;top:871px;width:173px;background:#65bf7b;padding:1px 9.6px 0 0"><span class="g">(+2)</span> 2</div>
<div class="c" style="left:861px;top:871px;width:173px;background:#68c07c;padding:1px 9.6px 0 0">4</div>
<div class="c" style="left:1034px;top:871px;width:103px;padding:1px 9px 0 0">4</div>
<div class="c" style="left:515px;top:889px;width:173px;background:#63be7b;padding:1px 9px 0 0"><b>2</b></div>
<div class="c" style="left:688px;top:889px;width:173px;background:#65bf7b;padding:1px 9.6px 0 0"><span class="g">(+12)</span> 2</div>
<div class="c" style="left:861px;top:889px;width:173px;background:#7ac580;padding:1px 9.6px 0 0"><span class="r">(-12)</span> 14</div>
<div class="c" style="left:1034px;top:889px;width:103px;padding:1px 9px 0 0">2</div>
<div class="c" style="left:515px;top:907px;width:173px;background:#63be7b;padding:1px 9px 0 0"><span class="g">(+3)</span> <b>1</b></div>
<div class="c" style="left:688px;top:907px;width:173px;background:#68c07c;padding:1px 9.6px 0 0"><span class="r">(-1)</span> 4</div>
<div class="c" style="left:861px;top:907px;width:173px;background:#67bf7c;padding:1px 9.6px 0 0"><span class="g">(+5)</span> 3</div>
<div class="c" style="left:1034px;top:907px;width:103px;padding:1px 9px 0 0">8</div>
<div class="c" style="left:515px;top:925px;width:173px;background:#63be7b;padding:1px 9px 0 0"><span class="g">(+7)</span> <b>1</b></div>
<div class="c" style="left:688px;top:925px;width:173px;background:#70c27e;padding:1px 9.6px 0 0"><span class="r">(-1)</span> 8</div>
<div class="c" style="left:861px;top:925px;width:173px;background:#6ec17d;padding:1px 9.6px 0 0"><span class="g">(+5)</span> 7</div>
<div class="c" style="left:1034px;top:925px;width:103px;padding:1px 9px 0 0">11</div>
<div style="left:32px;top:379px;width:1px;height:555px;background:repeating-linear-gradient(180deg,#9a9a9a 0 1px,transparent 1px 2px)"></div>
<svg class="ic" style="top:379px" width="14" height="4"><path d="M1 3.5h12.5V0" fill="none" stroke="#b4b8c4"/><path d="M1 3L2.5 0" stroke="#c8a028" stroke-width="1.7"/><path d="M10 0L11.8 3.5" stroke="#1a1a1a" stroke-width="1.9"/></svg>
<div style="left:33px;top:393px;width:11px;height:1px;background:repeating-linear-gradient(90deg,#9a9a9a 0 1px,transparent 1px 2px)"></div>
<svg class="ic" style="top:386px" width="14" height="16"><rect x="2.5" y="0.5" width="11" height="14" fill="#eeeff6" stroke="#b9bac4"/><rect x="9.3" y="8.6" width="3" height="2.4" fill="#f4f4f8" stroke="#9a9ca8" stroke-width="0.8"/><path d="M6.9 3.4L0.8 15" stroke="#c6a632" stroke-width="1.25"/><path d="M6.5 3.2L11.9 15.2" stroke="#161616" stroke-width="1.6"/><path d="M3.8 10.3H9.4" stroke="#4a4a3a" stroke-width="1"/></svg>
<div style="left:33px;top:411px;width:11px;height:1px;background:repeating-linear-gradient(90deg,#9a9a9a 0 1px,transparent 1px 2px)"></div>
<svg class="ic" style="top:404px" width="14" height="16"><rect x="2.5" y="0.5" width="11" height="14" fill="#eeeff6" stroke="#b9bac4"/><rect x="9.3" y="8.6" width="3" height="2.4" fill="#f4f4f8" stroke="#9a9ca8" stroke-width="0.8"/><path d="M6.9 3.4L0.8 15" stroke="#c6a632" stroke-width="1.25"/><path d="M6.5 3.2L11.9 15.2" stroke="#161616" stroke-width="1.6"/><path d="M3.8 10.3H9.4" stroke="#4a4a3a" stroke-width="1"/></svg>
<div style="left:33px;top:429px;width:11px;height:1px;background:repeating-linear-gradient(90deg,#9a9a9a 0 1px,transparent 1px 2px)"></div>
<svg class="ic" style="top:422px" width="14" height="16"><rect x="2.5" y="0.5" width="11" height="14" fill="#eeeff6" stroke="#b9bac4"/><rect x="9.3" y="8.6" width="3" height="2.4" fill="#f4f4f8" stroke="#9a9ca8" stroke-width="0.8"/><path d="M6.9 3.4L0.8 15" stroke="#c6a632" stroke-width="1.25"/><path d="M6.5 3.2L11.9 15.2" stroke="#161616" stroke-width="1.6"/><path d="M3.8 10.3H9.4" stroke="#4a4a3a" stroke-width="1"/></svg>
<div style="left:33px;top:447px;width:11px;height:1px;background:repeating-linear-gradient(90deg,#9a9a9a 0 1px,transparent 1px 2px)"></div>
<svg class="ic" style="top:440px" width="14" height="16"><rect x="2.5" y="0.5" width="11" height="14" fill="#eeeff6" stroke="#b9bac4"/><rect x="9.3" y="8.6" width="3" height="2.4" fill="#f4f4f8" stroke="#9a9ca8" stroke-width="0.8"/><path d="M6.9 3.4L0.8 15" stroke="#c6a632" stroke-width="1.25"/><path d="M6.5 3.2L11.9 15.2" stroke="#161616" stroke-width="1.6"/><path d="M3.8 10.3H9.4" stroke="#4a4a3a" stroke-width="1"/></svg>
<div style="left:33px;top:465px;width:11px;height:1px;background:repeating-linear-gradient(90deg,#9a9a9a 0 1px,transparent 1px 2px)"></div>
<svg class="ic" style="top:458px" width="14" height="16"><rect x="2.5" y="0.5" width="11" height="14" fill="#eeeff6" stroke="#b9bac4"/><rect x="9.3" y="8.6" width="3" height="2.4" fill="#f4f4f8" stroke="#9a9ca8" stroke-width="0.8"/><path d="M6.9 3.4L0.8 15" stroke="#c6a632" stroke-width="1.25"/><path d="M6.5 3.2L11.9 15.2" stroke="#161616" stroke-width="1.6"/><path d="M3.8 10.3H9.4" stroke="#4a4a3a" stroke-width="1"/></svg>
<div style="left:33px;top:483px;width:11px;height:1px;background:repeating-linear-gradient(90deg,#9a9a9a 0 1px,transparent 1px 2px)"></div>
<svg class="ic" style="top:476px" width="14" height="16"><rect x="2.5" y="0.5" width="11" height="14" fill="#eeeff6" stroke="#b9bac4"/><rect x="9.3" y="8.6" width="3" height="2.4" fill="#f4f4f8" stroke="#9a9ca8" stroke-width="0.8"/><path d="M6.9 3.4L0.8 15" stroke="#c6a632" stroke-width="1.25"/><path d="M6.5 3.2L11.9 15.2" stroke="#161616" stroke-width="1.6"/><path d="M3.8 10.3H9.4" stroke="#4a4a3a" stroke-width="1"/></svg>
<div style="left:33px;top:501px;width:11px;height:1px;background:repeating-linear-gradient(90deg,#9a9a9a 0 1px,transparent 1px 2px)"></div>
<svg class="ic" style="top:494px" width="14" height="16"><rect x="2.5" y="0.5" width="11" height="14" fill="#eeeff6" stroke="#b9bac4"/><rect x="9.3" y="8.6" width="3" height="2.4" fill="#f4f4f8" stroke="#9a9ca8" stroke-width="0.8"/><path d="M6.9 3.4L0.8 15" stroke="#c6a632" stroke-width="1.25"/><path d="M6.5 3.2L11.9 15.2" stroke="#161616" stroke-width="1.6"/><path d="M3.8 10.3H9.4" stroke="#4a4a3a" stroke-width="1"/></svg>
<div style="left:33px;top:519px;width:11px;height:1px;background:repeating-linear-gradient(90deg,#9a9a9a 0 1px,transparent 1px 2px)"></div>
<svg class="ic" style="top:512px" width="14" height="16"><rect x="2.5" y="0.5" width="11" height="14" fill="#eeeff6" stroke="#b9bac4"/><rect x="9.3" y="8.6" width="3" height="2.4" fill="#f4f4f8" stroke="#9a9ca8" stroke-width="0.8"/><path d="M6.9 3.4L0.8 15" stroke="#c6a632" stroke-width="1.25"/><path d="M6.5 3.2L11.9 15.2" stroke="#161616" stroke-width="1.6"/><path d="M3.8 10.3H9.4" stroke="#4a4a3a" stroke-width="1"/></svg>
<div style="left:33px;top:537px;width:11px;height:1px;background:repeating-linear-gradient(90deg,#9a9a9a 0 1px,transparent 1px 2px)"></div>
<svg class="ic" style="top:530px" width="14" height="16"><rect x="2.5" y="0.5" width="11" height="14" fill="#eeeff6" stroke="#b9bac4"/><rect x="9.3" y="8.6" width="3" height="2.4" fill="#f4f4f8" stroke="#9a9ca8" stroke-width="0.8"/><path d="M6.9 3.4L0.8 15" stroke="#c6a632" stroke-width="1.25"/><path d="M6.5 3.2L11.9 15.2" stroke="#161616" stroke-width="1.6"/><path d="M3.8 10.3H9.4" stroke="#4a4a3a" stroke-width="1"/></svg>
<div style="left:33px;top:555px;width:11px;height:1px;background:repeating-linear-gradient(90deg,#9a9a9a 0 1px,transparent 1px 2px)"></div>
<svg class="ic" style="top:548px" width="14" height="16"><rect x="2.5" y="0.5" width="11" height="14" fill="#eeeff6" stroke="#b9bac4"/><rect x="9.3" y="8.6" width="3" height="2.4" fill="#f4f4f8" stroke="#9a9ca8" stroke-width="0.8"/><path d="M6.9 3.4L0.8 15" stroke="#c6a632" stroke-width="1.25"/><path d="M6.5 3.2L11.9 15.2" stroke="#161616" stroke-width="1.6"/><path d="M3.8 10.3H9.4" stroke="#4a4a3a" stroke-width="1"/></svg>
<div style="left:33px;top:573px;width:11px;height:1px;background:repeating-linear-gradient(90deg,#9a9a9a 0 1px,transparent 1px 2px)"></div>
<svg class="ic" style="top:566px" width="14" height="16"><rect x="2.5" y="0.5" width="11" height="14" fill="#eeeff6" stroke="#b9bac4"/><rect x="9.3" y="8.6" width="3" height="2.4" fill="#f4f4f8" stroke="#9a9ca8" stroke-width="0.8"/><path d="M6.9 3.4L0.8 15" stroke="#c6a632" stroke-width="1.25"/><path d="M6.5 3.2L11.9 15.2" stroke="#161616" stroke-width="1.6"/><path d="M3.8 10.3H9.4" stroke="#4a4a3a" stroke-width="1"/></svg>
<div style="left:33px;top:591px;width:11px;height:1px;background:repeating-linear-gradient(90deg,#9a9a9a 0 1px,transparent 1px 2px)"></div>
<svg class="ic" style="top:584px" width="14" height="16"><rect x="2.5" y="0.5" width="11" height="14" fill="#eeeff6" stroke="#b9bac4"/><rect x="9.3" y="8.6" width="3" height="2.4" fill="#f4f4f8" stroke="#9a9ca8" stroke-width="0.8"/><path d="M6.9 3.4L0.8 15" stroke="#c6a632" stroke-width="1.25"/><path d="M6.5 3.2L11.9 15.2" stroke="#161616" stroke-width="1.6"/><path d="M3.8 10.3H9.4" stroke="#4a4a3a" stroke-width="1"/></svg>
<div style="left:33px;top:609px;width:11px;height:1px;background:repeating-linear-gradient(90deg,#9a9a9a 0 1px,transparent 1px 2px)"></div>
<svg class="ic" style="top:602px" width="14" height="16"><rect x="2.5" y="0.5" width="11" height="14" fill="#eeeff6" stroke="#b9bac4"/><rect x="9.3" y="8.6" width="3" height="2.4" fill="#f4f4f8" stroke="#9a9ca8" stroke-width="0.8"/><path d="M6.9 3.4L0.8 15" stroke="#c6a632" stroke-width="1.25"/><path d="M6.5 3.2L11.9 15.2" stroke="#161616" stroke-width="1.6"/><path d="M3.8 10.3H9.4" stroke="#4a4a3a" stroke-width="1"/></svg>
<div style="left:33px;top:627px;width:11px;height:1px;background:repeating-linear-gradient(90deg,#9a9a9a 0 1px,transparent 1px 2px)"></div>
<svg class="ic" style="top:620px" width="14" height="16"><rect x="2.5" y="0.5" width="11" height="14" fill="#eeeff6" stroke="#b9bac4"/><rect x="9.3" y="8.6" width="3" height="2.4" fill="#f4f4f8" stroke="#9a9ca8" stroke-width="0.8"/><path d="M6.9 3.4L0.8 15" stroke="#c6a632" stroke-width="1.25"/><path d="M6.5 3.2L11.9 15.2" stroke="#161616" stroke-width="1.6"/><path d="M3.8 10.3H9.4" stroke="#4a4a3a" stroke-width="1"/></svg>
<div style="left:33px;top:645px;width:11px;height:1px;background:repeating-linear-gradient(90deg,#9a9a9a 0 1px,transparent 1px 2px)"></div>
<svg class="ic" style="top:638px" width="14" height="16"><rect x="2.5" y="0.5" width="11" height="14" fill="#eeeff6" stroke="#b9bac4"/><rect x="9.3" y="8.6" width="3" height="2.4" fill="#f4f4f8" stroke="#9a9ca8" stroke-width="0.8"/><path d="M6.9 3.4L0.8 15" stroke="#c6a632" stroke-width="1.25"/><path d="M6.5 3.2L11.9 15.2" stroke="#161616" stroke-width="1.6"/><path d="M3.8 10.3H9.4" stroke="#4a4a3a" stroke-width="1"/></svg>
<div style="left:33px;top:663px;width:11px;height:1px;background:repeating-linear-gradient(90deg,#9a9a9a 0 1px,transparent 1px 2px)"></div>
<svg class="ic" style="top:656px" width="14" height="16"><rect x="2.5" y="0.5" width="11" height="14" fill="#eeeff6" stroke="#b9bac4"/><rect x="9.3" y="8.6" width="3" height="2.4" fill="#f4f4f8" stroke="#9a9ca8" stroke-width="0.8"/><path d="M6.9 3.4L0.8 15" stroke="#c6a632" stroke-width="1.25"/><path d="M6.5 3.2L11.9 15.2" stroke="#161616" stroke-width="1.6"/><path d="M3.8 10.3H9.4" stroke="#4a4a3a" stroke-width="1"/></svg>
<div style="left:33px;top:681px;width:11px;height:1px;background:repeating-linear-gradient(90deg,#9a9a9a 0 1px,transparent 1px 2px)"></div>
<svg class="ic" style="top:674px" width="14" height="16"><rect x="2.5" y="0.5" width="11" height="14" fill="#eeeff6" stroke="#b9bac4"/><rect x="9.3" y="8.6" width="3" height="2.4" fill="#f4f4f8" stroke="#9a9ca8" stroke-width="0.8"/><path d="M6.9 3.4L0.8 15" stroke="#c6a632" stroke-width="1.25"/><path d="M6.5 3.2L11.9 15.2" stroke="#161616" stroke-width="1.6"/><path d="M3.8 10.3H9.4" stroke="#4a4a3a" stroke-width="1"/></svg>
<div style="left:33px;top:699px;width:11px;height:1px;background:repeating-linear-gradient(90deg,#9a9a9a 0 1px,transparent 1px 2px)"></div>
<svg class="ic" style="top:692px" width="14" height="16"><rect x="2.5" y="0.5" width="11" height="14" fill="#eeeff6" stroke="#b9bac4"/><rect x="9.3" y="8.6" width="3" height="2.4" fill="#f4f4f8" stroke="#9a9ca8" stroke-width="0.8"/><path d="M6.9 3.4L0.8 15" stroke="#c6a632" stroke-width="1.25"/><path d="M6.5 3.2L11.9 15.2" stroke="#161616" stroke-width="1.6"/><path d="M3.8 10.3H9.4" stroke="#4a4a3a" stroke-width="1"/></svg>
<div style="left:33px;top:717px;width:11px;height:1px;background:repeating-linear-gradient(90deg,#9a9a9a 0 1px,transparent 1px 2px)"></div>
<svg class="ic" style="top:710px" width="14" height="16"><rect x="2.5" y="0.5" width="11" height="14" fill="#eeeff6" stroke="#b9bac4"/><rect x="9.3" y="8.6" width="3" height="2.4" fill="#f4f4f8" stroke="#9a9ca8" stroke-width="0.8"/><path d="M6.9 3.4L0.8 15" stroke="#c6a632" stroke-width="1.25"/><path d="M6.5 3.2L11.9 15.2" stroke="#161616" stroke-width="1.6"/><path d="M3.8 10.3H9.4" stroke="#4a4a3a" stroke-width="1"/></svg>
<div style="left:33px;top:735px;width:11px;height:1px;background:repeating-linear-gradient(90deg,#9a9a9a 0 1px,transparent 1px 2px)"></div>
<svg class="ic" style="top:728px" width="14" height="16"><rect x="2.5" y="0.5" width="11" height="14" fill="#eeeff6" stroke="#b9bac4"/><rect x="9.3" y="8.6" width="3" height="2.4" fill="#f4f4f8" stroke="#9a9ca8" stroke-width="0.8"/><path d="M6.9 3.4L0.8 15" stroke="#c6a632" stroke-width="1.25"/><path d="M6.5 3.2L11.9 15.2" stroke="#161616" stroke-width="1.6"/><path d="M3.8 10.3H9.4" stroke="#4a4a3a" stroke-width="1"/></svg>
<div style="left:33px;top:753px;width:11px;height:1px;background:repeating-linear-gradient(90deg,#9a9a9a 0 1px,transparent 1px 2px)"></div>
<svg class="ic" style="top:746px" width="14" height="16"><rect x="2.5" y="0.5" width="11" height="14" fill="#eeeff6" stroke="#b9bac4"/><rect x="9.3" y="8.6" width="3" height="2.4" fill="#f4f4f8" stroke="#9a9ca8" stroke-width="0.8"/><path d="M6.9 3.4L0.8 15" stroke="#c6a632" stroke-width="1.25"/><path d="M6.5 3.2L11.9 15.2" stroke="#161616" stroke-width="1.6"/><path d="M3.8 10.3H9.4" stroke="#4a4a3a" stroke-width="1"/></svg>
<div style="left:33px;top:771px;width:11px;height:1px;background:repeating-linear-gradient(90deg,#9a9a9a 0 1px,transparent 1px 2px)"></div>
<svg class="ic" style="top:764px" width="14" height="16"><rect x="2.5" y="0.5" width="11" height="14" fill="#eeeff6" stroke="#b9bac4"/><rect x="9.3" y="8.6" width="3" height="2.4" fill="#f4f4f8" stroke="#9a9ca8" stroke-width="0.8"/><path d="M6.9 3.4L0.8 15" stroke="#c6a632" stroke-width="1.25"/><path d="M6.5 3.2L11.9 15.2" stroke="#161616" stroke-width="1.6"/><path d="M3.8 10.3H9.4" stroke="#4a4a3a" stroke-width="1"/></svg>
<div style="left:33px;top:789px;width:11px;height:1px;background:repeating-linear-gradient(90deg,#9a9a9a 0 1px,transparent 1px 2px)"></div>
<svg class="ic" style="top:782px" width="14" height="16"><rect x="2.5" y="0.5" width="11" height="14" fill="#eeeff6" stroke="#b9bac4"/><rect x="9.3" y="8.6" width="3" height="2.4" fill="#f4f4f8" stroke="#9a9ca8" stroke-width="0.8"/><path d="M6.9 3.4L0.8 15" stroke="#c6a632" stroke-width="1.25"/><path d="M6.5 3.2L11.9 15.2" stroke="#161616" stroke-width="1.6"/><path d="M3.8 10.3H9.4" stroke="#4a4a3a" stroke-width="1"/></svg>
<div style="left:33px;top:807px;width:11px;height:1px;background:repeating-linear-gradient(90deg,#9a9a9a 0 1px,transparent 1px 2px)"></div>
<svg class="ic" style="top:800px" width="14" height="16"><rect x="2.5" y="0.5" width="11" height="14" fill="#eeeff6" stroke="#b9bac4"/><rect x="9.3" y="8.6" width="3" height="2.4" fill="#f4f4f8" stroke="#9a9ca8" stroke-width="0.8"/><path d="M6.9 3.4L0.8 15" stroke="#c6a632" stroke-width="1.25"/><path d="M6.5 3.2L11.9 15.2" stroke="#161616" stroke-width="1.6"/><path d="M3.8 10.3H9.4" stroke="#4a4a3a" stroke-width="1"/></svg>
<div style="left:33px;top:825px;width:11px;height:1px;background:repeating-linear-gradient(90deg,#9a9a9a 0 1px,transparent 1px 2px)"></div>
<svg class="ic" style="top:818px" width="14" height="16"><rect x="2.5" y="0.5" width="11" height="14" fill="#eeeff6" stroke="#b9bac4"/><rect x="9.3" y="8.6" width="3" height="2.4" fill="#f4f4f8" stroke="#9a9ca8" stroke-width="0.8"/><path d="M6.9 3.4L0.8 15" stroke="#c6a632" stroke-width="1.25"/><path d="M6.5 3.2L11.9 15.2" stroke="#161616" stroke-width="1.6"/><path d="M3.8 10.3H9.4" stroke="#4a4a3a" stroke-width="1"/></svg>
<div style="left:33px;top:843px;width:11px;height:1px;background:repeating-linear-gradient(90deg,#9a9a9a 0 1px,transparent 1px 2px)"></div>
<svg class="ic" style="top:836px" width="14" height="16"><rect x="2.5" y="0.5" width="11" height="14" fill="#eeeff6" stroke="#b9bac4"/><rect x="9.3" y="8.6" width="3" height="2.4" fill="#f4f4f8" stroke="#9a9ca8" stroke-width="0.8"/><path d="M6.9 3.4L0.8 15" stroke="#c6a632" stroke-width="1.25"/><path d="M6.5 3.2L11.9 15.2" stroke="#161616" stroke-width="1.6"/><path d="M3.8 10.3H9.4" stroke="#4a4a3a" stroke-width="1"/></svg>
<div style="left:33px;top:861px;width:11px;height:1px;background:repeating-linear-gradient(90deg,#9a9a9a 0 1px,transparent 1px 2px)"></div>
<svg class="ic" style="top:854px" width="14" height="16"><rect x="2.5" y="0.5" width="11" height="14" fill="#eeeff6" stroke="#b9bac4"/><rect x="9.3" y="8.6" width="3" height="2.4" fill="#f4f4f8" stroke="#9a9ca8" stroke-width="0.8"/><path d="M6.9 3.4L0.8 15" stroke="#c6a632" stroke-width="1.25"/><path d="M6.5 3.2L11.9 15.2" stroke="#161616" stroke-width="1.6"/><path d="M3.8 10.3H9.4" stroke="#4a4a3a" stroke-width="1"/></svg>
<div style="left:33px;top:879px;width:11px;height:1px;background:repeating-linear-gradient(90deg,#9a9a9a 0 1px,transparent 1px 2px)"></div>
<svg class="ic" style="top:872px" width="14" height="16"><rect x="2.5" y="0.5" width="11" height="14" fill="#eeeff6" stroke="#b9bac4"/><rect x="9.3" y="8.6" width="3" height="2.4" fill="#f4f4f8" stroke="#9a9ca8" stroke-width="0.8"/><path d="M6.9 3.4L0.8 15" stroke="#c6a632" stroke-width="1.25"/><path d="M6.5 3.2L11.9 15.2" stroke="#161616" stroke-width="1.6"/><path d="M3.8 10.3H9.4" stroke="#4a4a3a" stroke-width="1"/></svg>
<div style="left:33px;top:897px;width:11px;height:1px;background:repeating-linear-gradient(90deg,#9a9a9a 0 1px,transparent 1px 2px)"></div>
<svg class="ic" style="top:890px" width="14" height="16"><rect x="2.5" y="0.5" width="11" height="14" fill="#eeeff6" stroke="#b9bac4"/><rect x="9.3" y="8.6" width="3" height="2.4" fill="#f4f4f8" stroke="#9a9ca8" stroke-width="0.8"/><path d="M6.9 3.4L0.8 15" stroke="#c6a632" stroke-width="1.25"/><path d="M6.5 3.2L11.9 15.2" stroke="#161616" stroke-width="1.6"/><path d="M3.8 10.3H9.4" stroke="#4a4a3a" stroke-width="1"/></svg>
<div style="left:33px;top:915px;width:11px;height:1px;background:repeating-linear-gradient(90deg,#9a9a9a 0 1px,transparent 1px 2px)"></div>
<svg class="ic" style="top:908px" width="14" height="16"><rect x="2.5" y="0.5" width="11" height="14" fill="#eeeff6" stroke="#b9bac4"/><rect x="9.3" y="8.6" width="3" height="2.4" fill="#f4f4f8" stroke="#9a9ca8" stroke-width="0.8"/><path d="M6.9 3.4L0.8 15" stroke="#c6a632" stroke-width="1.25"/><path d="M6.5 3.2L11.9 15.2" stroke="#161616" stroke-width="1.6"/><path d="M3.8 10.3H9.4" stroke="#4a4a3a" stroke-width="1"/></svg>
<div style="left:33px;top:933px;width:11px;height:1px;background:repeating-linear-gradient(90deg,#9a9a9a 0 1px,transparent 1px 2px)"></div>
<svg class="ic" style="top:926px" width="14" height="16"><rect x="2.5" y="0.5" width="11" height="14" fill="#eeeff6" stroke="#b9bac4"/><rect x="9.3" y="8.6" width="3" height="2.4" fill="#f4f4f8" stroke="#9a9ca8" stroke-width="0.8"/><path d="M6.9 3.4L0.8 15" stroke="#c6a632" stroke-width="1.25"/><path d="M6.5 3.2L11.9 15.2" stroke="#161616" stroke-width="1.6"/><path d="M3.8 10.3H9.4" stroke="#4a4a3a" stroke-width="1"/></svg>
<div style="left:19px;top:944px;width:1870px;height:16px;background:#f0f0f0"></div>
<div style="left:36px;top:944px;width:432px;height:15px;background:#cdcdcd"></div>
<svg style="left:23.5px;top:947.5px" width="7" height="8"><path d="M5.8 0.7L1.6 4L5.8 7.3" fill="none" stroke="#444" stroke-width="2.1"/></svg>
<svg style="left:1858.5px;top:947.5px" width="7" height="8"><path d="M1.2 0.7L5.4 4L1.2 7.3" fill="none" stroke="#444" stroke-width="2.1"/></svg>
<div style="left:1871px;top:379px;width:17px;height:566px;background:#f0f0f0"></div>
<div style="left:1871px;top:909px;width:17px;height:17px;background:#cdcdcd"></div>
<svg style="left:1875px;top:384.5px" width="9" height="7"><path d="M0.7 5.8L4.3 1.6L7.9 5.8" fill="none" stroke="#444" stroke-width="2.1"/></svg>
<svg style="left:1875px;top:932px" width="9" height="7"><path d="M0.7 1.2L4.3 5.4L7.9 1.2" fill="none" stroke="#444" stroke-width="2.1"/></svg>
<div style="left:63px;top:370px;width:325px;height:577.8px;background:#808080"></div>
<div style="left:1137px;top:355px;width:288px;height:597px;background:#808080"></div>
</div>
</body></html>
